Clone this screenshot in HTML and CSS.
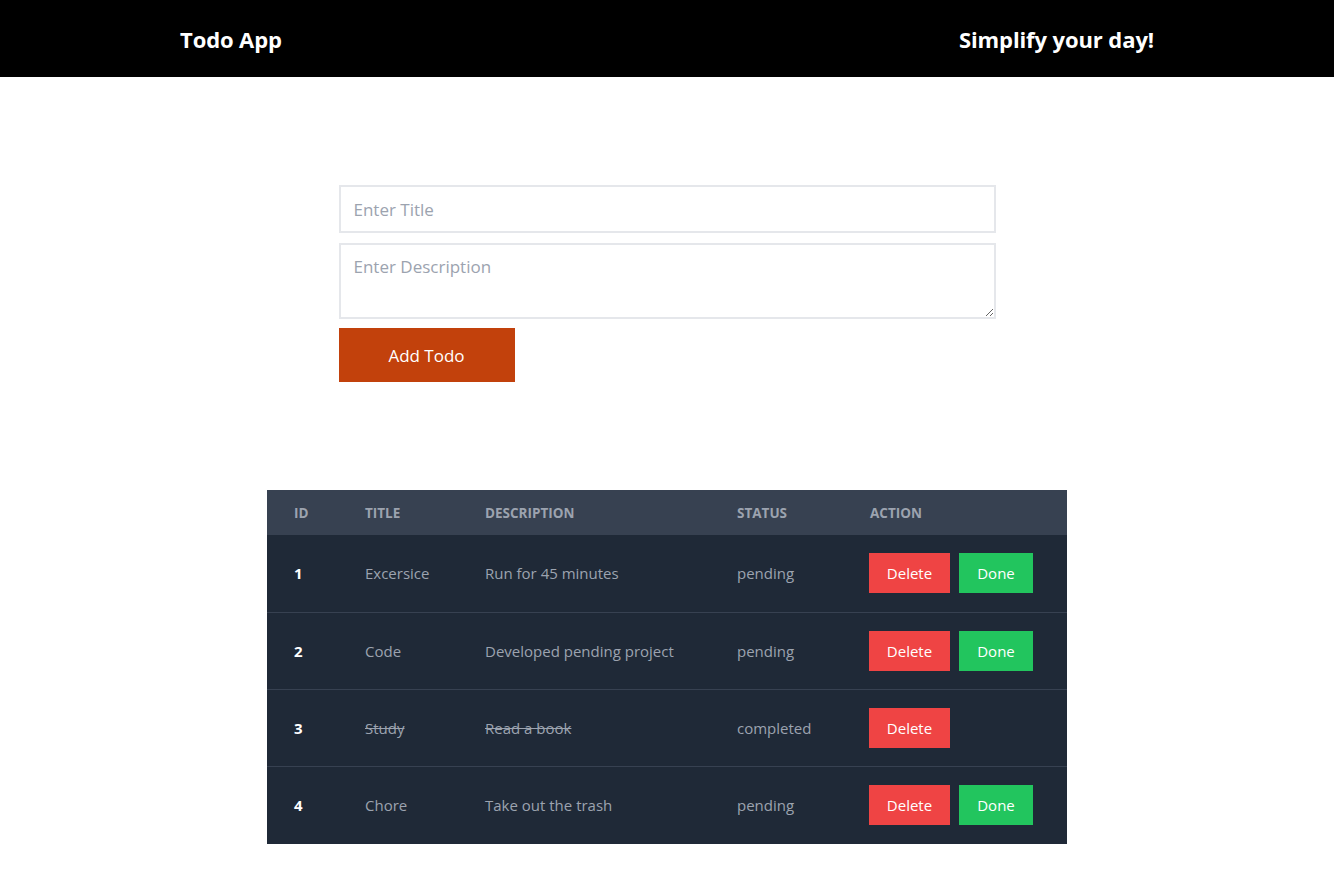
FILE: index.html
```html
<!DOCTYPE html>
<html lang="en">
<head>
<meta charset="utf-8">
<title>Todo App</title>
<link rel="stylesheet" href="styles.css">
</head>
<body>
<header class="topbar">
  <div class="brand">Todo App</div>
  <div class="tagline">Simplify your day!</div>
</header>
<main class="main">
  <form class="todo-form">
    <input class="field field-title" type="text" placeholder="Enter Title">
    <textarea class="field field-desc" placeholder="Enter Description"></textarea>
    <button class="add-btn" type="button">Add Todo</button>
  </form>
  <table class="todo-table">
    <colgroup>
      <col class="c-id"><col class="c-title"><col class="c-desc"><col class="c-status"><col class="c-action">
    </colgroup>
    <thead>
      <tr><th>ID</th><th>Title</th><th>Description</th><th>Status</th><th>Action</th></tr>
    </thead>
    <tbody>
      <tr>
        <td class="id">1</td><td>Excersice</td><td>Run for 45 minutes</td><td>pending</td>
        <td><div class="actions"><button class="btn btn-del" type="button">Delete</button><button class="btn btn-done" type="button">Done</button></div></td>
      </tr>
      <tr>
        <td class="id">2</td><td>Code</td><td>Developed pending project</td><td>pending</td>
        <td><div class="actions"><button class="btn btn-del" type="button">Delete</button><button class="btn btn-done" type="button">Done</button></div></td>
      </tr>
      <tr>
        <td class="id">3</td><td class="struck">Study</td><td class="struck">Read a book</td><td>completed</td>
        <td><div class="actions"><button class="btn btn-del" type="button">Delete</button></div></td>
      </tr>
      <tr>
        <td class="id">4</td><td>Chore</td><td>Take out the trash</td><td>pending</td>
        <td><div class="actions"><button class="btn btn-del" type="button">Delete</button><button class="btn btn-done" type="button">Done</button></div></td>
      </tr>
    </tbody>
  </table>
</main>
</body>
</html>
```

FILE: styles.css
```css
* { box-sizing: border-box; }
html, body { margin: 0; padding: 0; }
body {
  font-family: "Open Sans", "Noto Sans", sans-serif;
  background: #ffffff;
  color: #111827;
}
.topbar {
  height: 77px;
  background: #000000;
  color: #ffffff;
  display: flex;
  align-items: center;
  justify-content: space-between;
  padding: 0 180px;
}
.brand, .tagline {
  font-size: 22px;
  font-weight: 700;
  letter-spacing: -0.1px;
}
.main {
  display: flex;
  flex-direction: column;
  align-items: center;
  padding-top: 108px;
}
.todo-form {
  width: 657px;
  display: flex;
  flex-direction: column;
  align-items: flex-start;
  gap: 10px;
}
.field {
  width: 100%;
  border: 2px solid #e5e7eb;
  padding: 0 13px;
  font-family: inherit;
  font-size: 17px;
  color: #111827;
  outline: none;
  background: #fff;
}
.field::placeholder { color: #9ca3af; }
.field-title { height: 48px; }
.field-desc {
  height: 76px;
  padding-top: 10px;
  display: block;
  resize: vertical;
}
.add-btn {
  margin-top: -1px;
  width: 176px;
  height: 54px;
  background: #c2410c;
  color: #ffffff;
  border: none;
  font-family: inherit;
  font-size: 17px;
}
.todo-table {
  margin-top: 108px;
  width: 800px;
  border-collapse: collapse;
  table-layout: fixed;
  background: #1f2937;
}
.c-id { width: 71px; }
.c-title { width: 120px; }
.c-desc { width: 252px; }
.c-status { width: 133px; }
.c-action { width: 224px; }
.todo-table th {
  background: #374151;
  color: #9ca3af;
  text-align: left;
  text-transform: uppercase;
  font-size: 13.5px;
  font-weight: 700;
  height: 45px;
  padding: 0 0 0 27px;
}
.todo-table td {
  color: #9ca3af;
  font-size: 15px;
  height: 77px;
  padding: 0 0 0 27px;
  border-top: 1px solid #374151;
  white-space: nowrap;
}
.todo-table tbody tr:first-child td { border-top: none; }
.todo-table tbody tr:last-child td { height: 78px; }
.todo-table td.id {
  color: #ffffff;
  font-weight: 700;
}
.todo-table td.struck { text-decoration: line-through; }
.actions {
  display: flex;
  gap: 9px;
  margin-left: -1px;
}
.btn {
  height: 40px;
  border: none;
  color: #ffffff;
  font-family: inherit;
  font-size: 15px;
  padding: 0;
}
.btn-del { width: 81px; background: #ef4444; }
.btn-done { width: 74px; background: #22c55e; }
```
